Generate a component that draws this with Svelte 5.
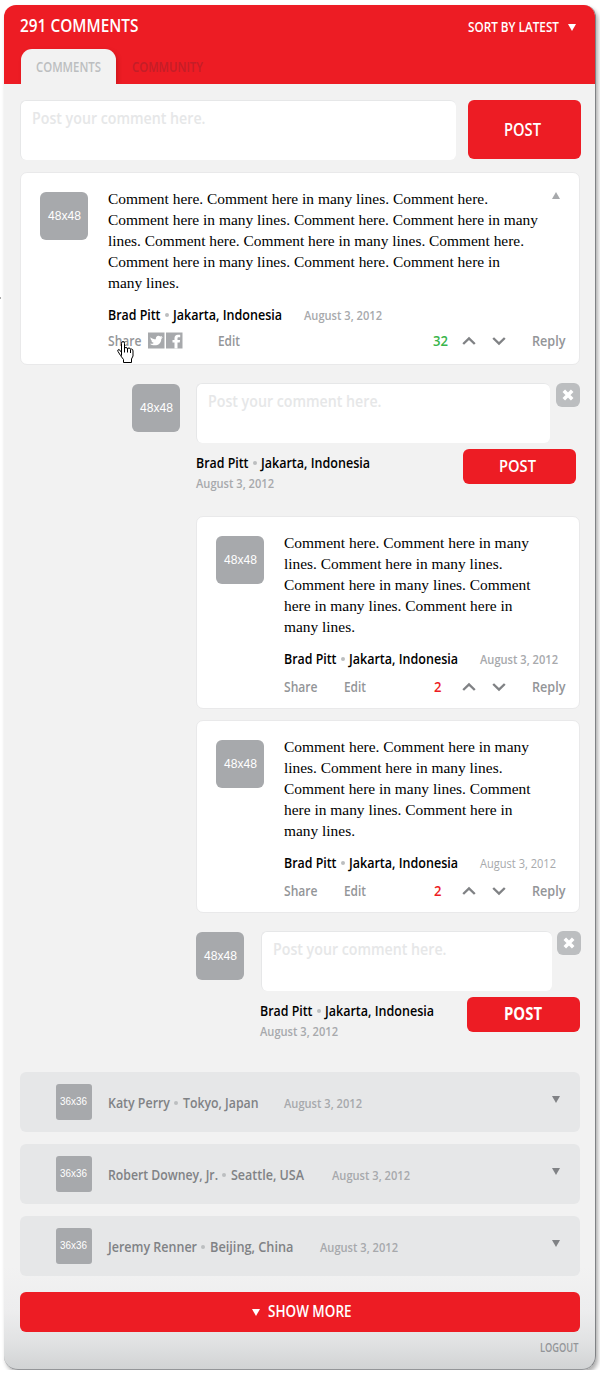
<script>
  const wide = [
    ['Comment here. Comment here in many lines. Comment here.', 380],
    ['Comment here in many lines. Comment here. Comment here in many', 430],
    ['lines. Comment here. Comment here in many lines. Comment here.', 416],
    ['Comment here in many lines. Comment here. Comment here in', 392],
    ['many lines.', 71]
  ];
  const narrow = [
    ['Comment here. Comment here in many', 245],
    ['lines. Comment here in many lines.', 218.5],
    ['Comment here in many lines. Comment', 246.5],
    ['here in many lines. Comment here in', 228.5],
    ['many lines.', 71]
  ];
  const brad = ['Brad Pitt', 52.5, 'Jakarta, Indonesia', 109];
  const people = [
    { who: ['Katy Perry', 62, 'Tokyo, Japan', 75.5], gap: 25 },
    { who: ['Robert Downey, Jr.', 110, 'Seattle, USA', 73], gap: 28 },
    { who: ['Jeremy Renner', 89, 'Beijing, China', 83.5], gap: 26 }
  ];
</script>

{#snippet label(text, width, size, cls = '')}
  <svg class="label {cls}" {width} height="20"><text x="0" y="15" font-size={size} textLength={width} lengthAdjust="spacingAndGlyphs">{text}</text></svg>
{/snippet}

{#snippet person(p)}
  <div class="person">
    {@render label(p[0], p[1], 14.5)}<i class="dot"></i>{@render label(p[2], p[3], 14.5)}
  </div>
{/snippet}

{#snippet avatar(small = false)}
  <div class="avatar" class:small>
    {#if small}{@render label('36x36', 27, 10.5, 'dim')}{:else}{@render label('48x48', 33, 12.5, 'dim')}{/if}
  </div>
{/snippet}

{#snippet tri(cls, up = false)}
  <svg class="tri {cls}" width="8" height="7"><path d={up ? 'M0 7 4 0 8 7z' : 'M0 0h8L4 7z'} /></svg>
{/snippet}

{#snippet card(lines, opts)}
  <article class="card" class:hovered={opts.hovered}>
    {@render avatar()}
    <div class="body">
      <div class="prose">
        {#each lines as l}{@render label(l[0], l[1], 15, 'serif')}{/each}
      </div>
      <div class="meta">{@render person(brad)}{@render label('August 3, 2012', opts.light ? 76 : 78, 12, opts.light ? 'date light' : 'date')}</div>
      <div class="actions">
        <div class="links">
          <div class="share">
            {@render label('Share', 33.5, 14.5)}
            {#if opts.hovered}
              <svg class="social" width="35" height="17" viewBox="0 0 35 17">
                <path d="M0 .5h16.5v16H0zM18 .5h16.5v16H18z" fill="#a7a9ac" />
                <path d="M2 11.8c2 .2 3.1-.3 3.800-.9-1.200-.1-2-.8-2.300-1.800h1C3.400 8.700 2.500 7.600 2.400 5.200c1.700 1.500 3.400 2 5.400 2C7.700 5 8.900 3.800 10.400 3.800c.8 0 1.400.3 1.800.8l2-.6-.9 1.500 1.600-.2-1.600 1.600c-.1 3.900-2.900 6.400-6.400 6.400C4.600 13.300 3 12.800 2 11.800z" fill="#fff" />
                <path d="M26.500 16.500v-6h-2V8h2V6.200c0-2.300 1.200-3.500 3.400-3.500h2.300v2.500h-1.500c-.9 0-1.200.4-1.200 1.100V8h2.600l-.4 2.500h-2.200v6z" fill="#fff" />
              </svg>
              <svg class="cursor" width="18" height="23" viewBox="0 0 18 23">
                <path d="M5.500 14.500V2.500q0-2 1.500-2t1.500 2v5q0-1 1.500-1t1.500 1.500q0-1 1.500-1t1.500 1.500q0-.5 1-.5 1.500 0 1.500 2v5l-1.500 3v3.500h-8v-3l-3-4-2.500-4q-.8-2 .8-2 1 0 2.700 3z" fill="#fff" stroke="#000" />
                <path d="M8.500 7v4.500M11.500 8v3.500M14.500 9v3" stroke="#000" />
              </svg>
            {/if}
          </div>
          {@render label('Edit', 22, 14.5)}
        </div>
        <div class="votes">
          {#if opts.hovered}{@render label('32', 15, 14.5, 'green')}{:else}{@render label('2', 7.5, 14.5, 'red')}{/if}
        </div>
        <svg class="chev" width="14" height="10"><path d="M1.200 8 7 2.500 12.800 8" /></svg>
        <svg class="chev" width="14" height="10"><path d="M1.200 2 7 7.500 12.800 2" /></svg>
        {@render label('Reply', 33.5, 14.5)}
      </div>
    </div>
    {#if opts.hovered}{@render tri('collapse', true)}{/if}
  </article>
{/snippet}

{#snippet replyForm(second)}
  <section class="reply" class:second>
    {@render avatar()}
    <div class="form">
      <div class="line">
        <div class="input">{@render label('Post your comment here.', 173.5, 16)}</div>
        <button class="close" aria-label="Close"><svg width="12" height="12"><path d="M1.800 1.800 10.200 10.200M10.200 1.800 1.800 10.200" /></svg></button>
      </div>
      <div class="under">
        <div class="author">{@render person(brad)}{@render label('August 3, 2012', 78, 12, 'date')}</div>
        <button class="post">{@render label('POST', second ? 38 : 37, 17, second ? 'bold' : '')}</button>
      </div>
    </div>
  </section>
{/snippet}

<span class="speck"></span>
<main>
  <header>
    <div class="top">
      {@render label('291 COMMENTS', 118.5, 17.3)}
      <div class="sort">{@render label('SORT BY LATEST', 91, 13.8)}{@render tri('white')}</div>
    </div>
    <nav>
      <div class="tab active">{@render label('COMMENTS', 65, 14)}</div>
      <div class="tab">{@render label('COMMUNITY', 71, 14)}</div>
    </nav>
  </header>
  <div class="content">
    <div class="composer">
      <div class="input">{@render label('Post your comment here.', 173.5, 16)}</div>
      <button class="post big">{@render label('POST', 37, 17.3)}</button>
    </div>
    {@render card(wide, { hovered: true })}
    {@render replyForm(false)}
    <div class="nested">
      {@render card(narrow, {})}
      {@render card(narrow, { light: true })}
    </div>
    {@render replyForm(true)}
    <div class="rows">
      {#each people as p}
        <div class="row">
          {@render avatar(true)}
          <div class="rowtext" style="gap:{p.gap}px">{@render person(p.who)}{@render label('August 3, 2012', 78, 12, 'date')}</div>
          {@render tri('dark')}
        </div>
      {/each}
    </div>
    <button class="more">{@render tri('white')}{@render label('SHOW MORE', 83.5, 15.8)}</button>
    <div class="logout">{@render label('LOGOUT', 38.5, 12.2)}</div>
  </div>
</main>

<style>
  :global(body) { background: #fff; }
  main, main * { box-sizing: border-box; }
  main {
    width: 592px; height: 1365px; margin: 5px 0 0 4px; overflow: hidden;
    border-radius: 12px 12px 14px 14px;
    border-right: 1px solid #808285; border-bottom: 1px solid #939598;
    background: linear-gradient(#f2f2f2 0, #f2f2f2 1262px, #ededee 1305px, #e1e2e3 1337px, #d1d3d4 1364px);
    box-shadow: 2px 3px 4px rgba(0, 0, 0, .32);
    font-family: "Open Sans", "Noto Sans", sans-serif; font-weight: 600;
  }
  :global(#app) { display: flow-root; }
  .speck { position: absolute; left: 0; top: 297px; width: 1px; height: 2px; background: #aaa; }
  .label { display: block; overflow: visible; flex: none; fill: currentColor; }
  .serif { font-family: "Liberation Serif", serif; font-weight: 400; color: #000; }
  .dim { font-family: "Liberation Sans", sans-serif; font-weight: 400; color: #fff; }
  .date { color: #a7a9ac; }
  .light { font-weight: 400; }
  .bold { font-weight: 700; }
  .green { color: #39b54a; }
  .red { color: #ed1c24; }
  button { border: 0; padding: 0; margin: 0; font: inherit; color: #fff; display: flex; justify-content: center; align-items: flex-start; }

  header { height: 79px; width: 592px; background: #ed1c24; color: #fff; display: flex; flex-direction: column; justify-content: space-between; }
  .top { display: flex; justify-content: space-between; padding: 12px 20px 0 16px; }
  .sort { display: flex; gap: 9px; }
  .tri { display: block; flex: none; }
  .white { fill: #fff; margin-top: 7px; }
  .dark { fill: #808285; margin-top: 24px; }
  nav { display: flex; padding-left: 17px; height: 35px; }
  .tab { padding: 8px 16px 0; color: #c41e28; }
  .active { width: 95px; padding-left: 15px; background: #f2f2f2; border-radius: 11px 11px 0 0; color: #bcbec0; box-shadow: 2px 2px 4px rgba(120, 0, 0, .25); clip-path: inset(-4px -6px 0 -4px); }

  .content { padding: 16px 14px 0 16px; display: flex; flex-direction: column; }
  .composer { display: flex; justify-content: space-between; }
  .input { width: 436px; height: 60px; padding: 8px 11px; background: #fff; border-radius: 6px; border-top: 1px solid #e6e7e8; border-left: 1px solid #e6e7e8; color: #e6e7e8; }
  .post { width: 113px; height: 35px; padding-top: 8px; background: #ed1c24; border-radius: 6px; flex: none; }
  .big { height: 59px; padding-top: 21px; padding-right: 4px; }

  .card { display: flex; width: 560px; height: 193px; border: 1px solid #e9e9ea; border-radius: 7px; background: #fff; padding-left: 19px; }
  .avatar { width: 48px; height: 48px; flex: none; background: #a7a9ac; border-radius: 6px; display: flex; justify-content: center; padding: 13px 0 0 1px; }
  .card .avatar { margin: 19px 20px 0 0; }
  .small { width: 36px; height: 36px; border-radius: 3px; padding: 6px 1px 0 0; }
  .body { padding-top: 16px; flex: none; }
  .prose { display: flex; flex-direction: column; gap: 1px; }
  .person { display: flex; }
  .dot { width: 4px; height: 4px; margin: 8px 4px 0; border-radius: 50%; background: #bcbec0; }
  .meta { display: flex; gap: 22px; margin-top: 12px; }
  .actions { display: flex; margin-top: 8px; color: #939598; }
  .links { display: flex; flex: none; width: 150px; gap: 26px; }
  .share { display: flex; position: relative; gap: 6px; }
  .votes { width: 28px; flex: none; }
  .chev { flex: none; margin: 5px 16px 0 0; fill: none; stroke: #808285; stroke-width: 2.4; }
  .chev + .chev { margin-right: 26px; }
  .hovered { margin-top: 12px; }
  .hovered .actions { margin-top: 6px; }
  .hovered .links { width: 325px; gap: 35px; }
  .hovered .votes { width: 29px; }
  .hovered .body { width: 444px; }
  .collapse { fill: #a7a9ac; margin-top: 19px; }
  .social { margin-top: 1px; display: block; }
  .cursor { position: absolute; left: 8px; top: 10px; fill: none; }

  .reply { display: flex; gap: 16px; margin: 18px 0 0 112px; }
  .reply .avatar { margin-top: 1px; }
  .form { width: 384px; }
  .line { display: flex; justify-content: space-between; }
  .reply .input { width: 354px; }
  .close { width: 24px; height: 24px; align-items: center; background: #bcbec0; border-radius: 6px; }
  .close svg { fill: none; stroke: #fff; stroke-width: 3.6; }
  .under { display: flex; justify-content: space-between; margin-top: 6px; padding-right: 4px; }
  .author { display: flex; flex-direction: column; margin-top: 4px; }
  .reply .post { padding-right: 4px; }
  .nested { margin: 23px 0 0 176px; display: flex; flex-direction: column; gap: 11px; }
  .nested .card { width: 384px; }
  .second { margin: 18px 0 0 176px; }
  .second .form { width: 321px; }
  .second .line { margin: 0 0 0 1px; }
  .second .input { width: 291px; }
  .second .under { padding-right: 1px; }
  .second .post { padding-right: 2px; }

  .reply.second .form { width: 321px; }
  .rows { display: flex; flex-direction: column; gap: 12px; margin-top: 31px; }
  .row { width: 560px; height: 60px; display: flex; padding: 0 20px 0 36px; background: #e6e7e8; border-radius: 6px; color: #808285; }
  .row .avatar { margin: 12px 16px 0 0; }
  .row :global(.dot) { margin-right: 5px; }
  .rowtext { display: flex; padding-top: 21px; flex: 1; }
  .more { width: 560px; height: 40px; margin-top: 16px; gap: 8px; padding: 10px 0 0 3px; background: #ed1c24; border-radius: 6px; }
  .logout { display: flex; justify-content: flex-end; margin-top: 5px; padding-right: 3px; color: #939598; }
</style>
